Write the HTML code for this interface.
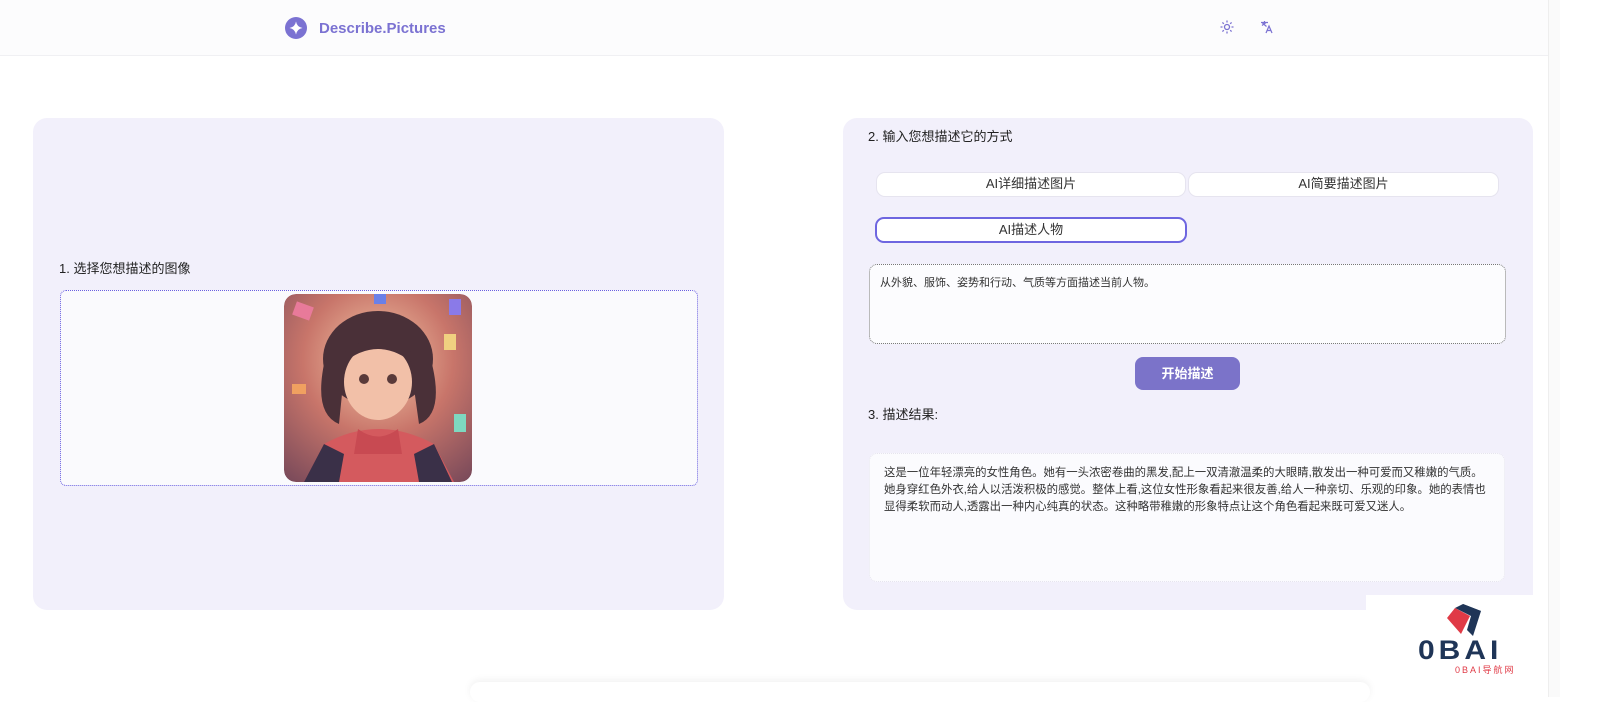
<!DOCTYPE html>
<html><head><meta charset="utf-8"><style>
*{box-sizing:border-box;margin:0;padding:0}
body{width:1600px;height:697px;overflow:hidden;background:#fff;font-family:"Liberation Sans","Noto Sans CJK SC",sans-serif;color:#222;position:relative}
.hdr{position:absolute;left:0;top:0;width:1548px;height:56px;background:#fcfcfd;border-bottom:1px solid #f0f0f3}
.logo{position:absolute;left:285px;top:17px;display:flex;align-items:center;gap:12px;color:#6e66cc;font-size:15px;font-weight:bold}
.sb{position:absolute;left:1548px;top:0;width:12px;height:697px;background:#fafafa;border-left:1px solid #eee}
.panel{position:absolute;background:#f2f0fb;border-radius:14px}
.t{position:absolute;font-size:13px;color:#222}
.btn{position:absolute;height:25px;background:#fff;border:1.5px solid #e6e4ef;border-radius:9px;font-size:13px;text-align:center;line-height:22px;color:#333}
.res div{white-space:nowrap}
</style></head><body>
<div class="hdr">
 <div class="logo"><svg width="22" height="22" viewBox="0 0 22 22"><circle cx="11" cy="11" r="11" fill="#7b72d2"/><path d="M11 4.5 Q12 10 17.5 11 Q12 12 11 17.5 Q10 12 4.5 11 Q10 10 11 4.5Z" fill="#fff"/></svg><span style="color:#7b72d2;font-weight:600">Describe.Pictures</span></div>
 <svg style="position:absolute;left:1220px;top:20px" width="14" height="14" viewBox="0 0 14 14" stroke="#7b72d2" stroke-width="1.3" fill="none"><circle cx="7" cy="7" r="2.5"/><path d="M7 0.5v2M7 11.5v2M0.5 7h2M11.5 7h2M2.4 2.4l1.4 1.4M10.2 10.2l1.4 1.4M2.4 11.6l1.4-1.4M10.2 3.8l1.4-1.4"/></svg>
 <svg style="position:absolute;left:1260px;top:20px" width="14" height="14" viewBox="0 0 14 14" stroke="#7b72d2" stroke-width="1.2" fill="none"><path d="M1 2.5h7M4.5 1v1.5M2 5.5l4-3M2.5 3l4 3.5M6 13l3-7 3 7M7.2 10.5h3.6"/></svg>
</div>
<div class="sb"></div>

<div class="panel" style="left:33px;top:118px;width:691px;height:492px"></div>
<div class="t" style="left:59px;top:258px">1. 选择您想描述的图像</div>
<div style="position:absolute;left:60px;top:290px;width:638px;height:196px;background:#fafafd;border:1.5px dotted #6a60e0;border-radius:6px"></div>
<svg style="position:absolute;left:284px;top:294px;border-radius:12px" width="188" height="188" viewBox="0 0 188 188">
<defs><radialGradient id="bg" cx="0.5" cy="0.35" r="0.8"><stop offset="0" stop-color="#f4c9a8"/><stop offset="0.5" stop-color="#c8756a"/><stop offset="1" stop-color="#7a4a5a"/></radialGradient><clipPath id="c"><rect width="188" height="188" rx="12"/></clipPath></defs>
<g clip-path="url(#c)">
<rect width="188" height="188" fill="url(#bg)"/>
<rect x="10" y="10" width="18" height="14" fill="#e87a9a" transform="rotate(20 19 17)"/>
<rect x="160" y="40" width="12" height="16" fill="#f0d080"/>
<rect x="170" y="120" width="12" height="18" fill="#7ed8c0"/>
<rect x="8" y="90" width="14" height="10" fill="#f0a060"/>
<rect x="90" y="0" width="12" height="10" fill="#6a80e8"/>
<rect x="165" y="5" width="12" height="16" fill="#8a7ae8"/>
<path d="M40 150 Q94 120 150 150 L170 188 L20 188Z" fill="#d45a5e"/>
<path d="M20 188 L40 150 L60 160 L55 188Z M168 188 L150 150 L130 160 L135 188Z" fill="#3a3048"/>
<ellipse cx="94" cy="65" rx="55" ry="48" fill="#4a3038"/>
<path d="M40 70 Q30 120 55 130 L60 80Z M148 70 Q160 120 135 130 L128 80Z" fill="#4a3038"/>
<ellipse cx="94" cy="88" rx="34" ry="38" fill="#f2c0a8"/>
<path d="M58 70 Q94 40 130 70 L130 60 Q94 30 58 60Z" fill="#4a3038"/>
<circle cx="80" cy="85" r="5" fill="#5a3a3a"/><circle cx="108" cy="85" r="5" fill="#5a3a3a"/>
<path d="M74 135 Q94 150 114 135 L118 160 L70 160Z" fill="#c84a52"/>
</g></svg>

<div class="panel" style="left:843px;top:118px;width:690px;height:492px"></div>
<div style="position:absolute;left:1366px;top:595px;width:182px;height:30px;background:#fff"></div>
<div class="t" style="left:868px;top:126px">2. 输入您想描述它的方式</div>
<div class="btn" style="left:876px;top:172px;width:310px">AI详细描述图片</div>
<div class="btn" style="left:1188px;top:172px;width:311px">AI简要描述图片</div>
<div class="btn" style="left:875px;top:217px;width:312px;height:26px;border:2px solid #6e66e0">AI描述人物</div>
<div style="position:absolute;left:869px;top:264px;width:637px;height:80px;background:#fcfcfe;border:1.2px dotted #777;border-radius:8px;font-size:11px;padding:9px 10px;color:#333">从外貌、服饰、姿势和行动、气质等方面描述当前人物。</div>
<div style="position:absolute;left:1135px;top:357px;width:105px;height:33px;background:#7b73c9;border-radius:8px;color:#fff;font-size:13px;text-align:center;line-height:33px;font-weight:bold">开始描述</div>
<div class="t" style="left:868px;top:404px">3. 描述结果:</div>
<div class="res" style="position:absolute;left:869px;top:453px;width:636px;height:129px;background:#fbfbfe;border:1px dotted #e6e4ee;border-radius:8px;font-size:11.4px;line-height:17px;padding:11px 0 11px 14px;color:#333;overflow:hidden">
<div>这是一位年轻漂亮的女性角色。她有一头浓密卷曲的黑发,配上一双清澈温柔的大眼睛,散发出一种可爱而又稚嫩的气质。</div>
<div>她身穿红色外衣,给人以活泼积极的感觉。整体上看,这位女性形象看起来很友善,给人一种亲切、乐观的印象。她的表情也</div>
<div>显得柔软而动人,透露出一种内心纯真的状态。这种略带稚嫩的形象特点让这个角色看起来既可爱又迷人。</div>
</div>

<div style="position:absolute;left:470px;top:682px;width:900px;height:20px;border-radius:10px;box-shadow:0 -2px 8px rgba(0,0,0,0.06)"></div>

<svg style="position:absolute;left:1443px;top:602px" width="44" height="38" viewBox="0 0 44 38"><path d="M20 2 L38 9 L30 34 L24 28 L28 14Z" fill="#1f3557"/><path d="M20 2 L38 9 L28 14 L12 6Z" fill="#1f3557"/><path d="M4 16 L12 6 L27 14 L18 32Z" fill="#e03a46"/></svg>
<div style="position:absolute;left:1418px;top:634px;font-size:30px;font-weight:900;color:#1f3557;letter-spacing:4px;font-family:'Liberation Sans',sans-serif;transform:scaleY(0.9)">0BAI</div>
<div style="position:absolute;left:1455px;top:663px;font-size:9px;color:#e03a46;letter-spacing:2px">0BAI导航网</div>
</body></html>
